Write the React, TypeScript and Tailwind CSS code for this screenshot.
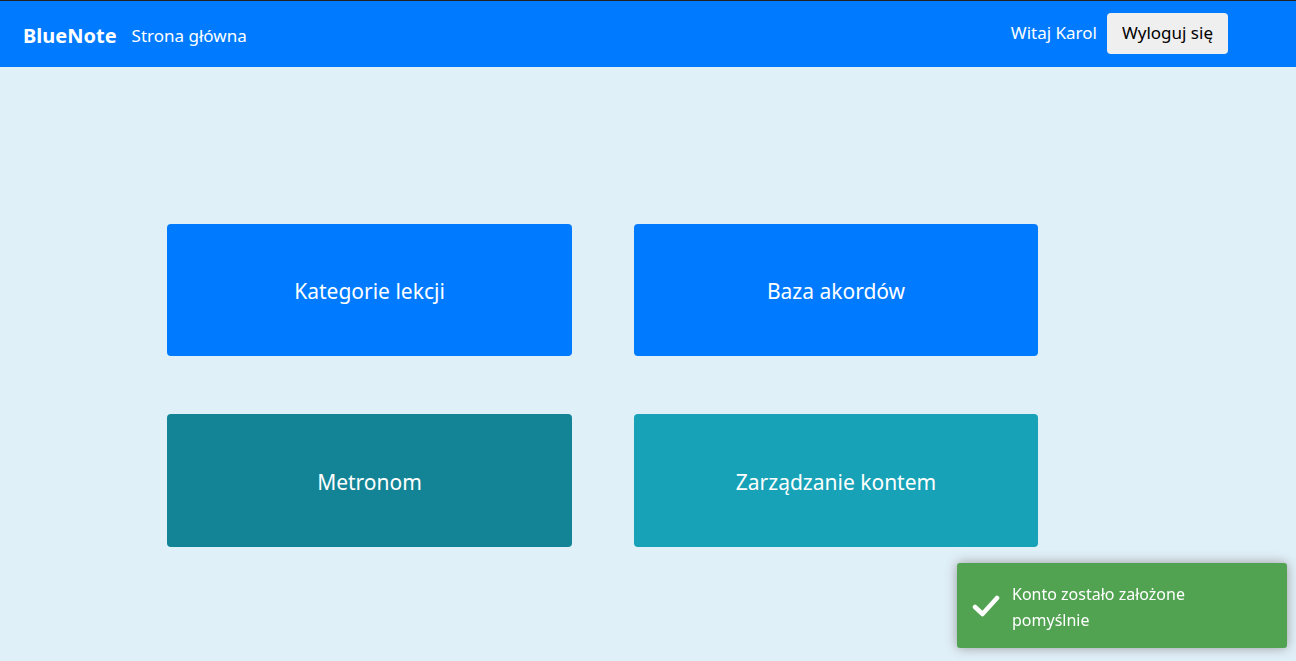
import React from 'react';

const TILES = [
  { label: 'Kategorie lekcji', color: 'bg-[#007bff]', h: 'h-[132px]' },
  { label: 'Baza akordów', color: 'bg-[#007bff]', h: 'h-[132px]' },
  { label: 'Metronom', color: 'bg-[#138496]', h: 'h-[133px]' },
  { label: 'Zarządzanie kontem', color: 'bg-[#17a2b8]', h: 'h-[133px]' },
];

export default function App() {
  return (
    <div className="min-h-[661px] bg-[#e0f0f9] font-['Noto_Sans',sans-serif] border-t border-[#222]">
      {/* Navbar */}
      <nav className="h-[66px] bg-[#007bff] flex items-center pl-[23px] pr-[68px] text-white">
        <span className="text-[20px] font-bold pt-[4px]">BlueNote</span>
        <a href="#" className="ml-[15px] text-[17px] pt-[4px]">Strona główna</a>
        <div className="ml-auto flex items-center gap-[10px]">
          <span className="text-[17px] pb-[3px]">Witaj Karol</span>
          <button className="h-[41px] px-[15px] mb-[2px] rounded-[4px] bg-[#efefef] text-black text-[17px]">
            Wyloguj się
          </button>
        </div>
      </nav>

      {/* Tiles */}
      <main className="pt-[157px] pl-[167px]">
        <div className="grid grid-cols-[405px_404px] gap-x-[62px] gap-y-[58px]">
          {TILES.map((t) => (
            <button
              key={t.label}
              className={`${t.color} ${t.h} rounded-[4px] text-white text-[21px] pt-[4px] flex items-center justify-center`}
            >
              {t.label}
            </button>
          ))}
        </div>
      </main>

      {/* Toast */}
      <div className="fixed right-[9px] bottom-[13px] w-[330px] h-[85px] bg-[#51a351] rounded-[3px] shadow-[0_0_12px_#999] flex items-center pl-[15px] pr-[15px] text-white">
        <svg width="28" height="24" viewBox="0 0 28 24" className="shrink-0">
          <path d="M3 13 L10.5 20 L25 4" fill="none" stroke="white" strokeWidth="4.5" strokeLinecap="round" strokeLinejoin="round" />
        </svg>
        <p className="ml-[12px] text-[16px] leading-[26px] w-[230px] pt-[2px]">Konto zostało założone pomyślnie</p>
      </div>
    </div>
  );
}
